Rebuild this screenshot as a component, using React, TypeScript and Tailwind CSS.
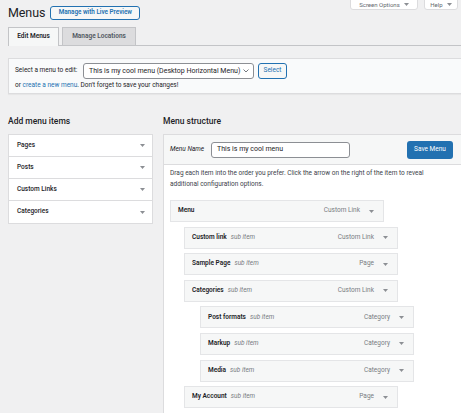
import React from "react";

const Arrow = ({ className = "" }: { className?: string }) => (
  <svg width="5" height="3" viewBox="0 0 5 3" className={className}>
    <path d="M0 0 L5 0 L2.5 3 Z" fill="#8c8f94" />
  </svg>
);

type Item = { title: string; type: string; depth: number; sub?: boolean };

const items: Item[] = [
  { title: "Menu", type: "Custom Link", depth: 0 },
  { title: "Custom link", type: "Custom Link", depth: 1, sub: true },
  { title: "Sample Page", type: "Page", depth: 1, sub: true },
  { title: "Categories", type: "Custom Link", depth: 1, sub: true },
  { title: "Post formats", type: "Category", depth: 2, sub: true },
  { title: "Markup", type: "Category", depth: 2, sub: true },
  { title: "Media", type: "Category", depth: 2, sub: true },
  { title: "My Account", type: "Page", depth: 1, sub: true },
];

const depthClass = ["ml-0", "ml-[14px]", "ml-[30px]"];

export default function App() {
  return (
    <div
      className="w-[461px] h-[413px] overflow-hidden bg-[#f0f0f1] text-[#1d2327]"
      style={{ fontFamily: "Roboto, 'Liberation Sans', sans-serif" }}
    >
      <div className="w-[490px] pl-[8px]">
        {/* header */}
        <div className="flex items-start justify-between h-[27px]">
          <div className="flex items-center gap-[5px] pt-[6px]">
            <h1 className="text-[12.5px] leading-[14px] font-normal tracking-[-0.1px]">Menus</h1>
            <span className="h-[14px] w-[90px] flex items-center justify-center border border-[#2271b1] rounded-[3px] bg-[#f6f7f7] text-[#2271b1] text-[6.3px] font-semibold">
              Manage with Live Preview
            </span>
          </div>
          <div className="flex gap-[6px] mr-[32px] -mt-[2px]">
            <span className="h-[12px] w-[68px] flex items-center justify-center gap-[4px] bg-white border border-[#dcdcde] rounded-b-[3px] text-[6px] text-[#646970]">
              Screen Options <Arrow />
            </span>
            <span className="h-[12px] w-[34px] flex items-center justify-center gap-[4px] bg-white border border-[#dcdcde] rounded-b-[3px] text-[6px] text-[#646970]">
              Help <Arrow />
            </span>
          </div>
        </div>

        {/* tabs */}
        <div className="flex items-end gap-[3px] border-b border-[#c3c4c7] h-[19px]">
          <span className="h-[19px] w-[51px] flex items-center justify-center bg-[#f6f7f7] border border-b-0 border-[#c3c4c7] text-[6.5px] font-semibold -mb-px">
            Edit Menus
          </span>
          <span className="h-[18px] w-[74px] flex items-center justify-center bg-[#dcdcde] border border-b-0 border-[#c3c4c7] text-[6.5px] font-semibold text-[#50575e]">
            Manage Locations
          </span>
        </div>

        {/* select menu box */}
        <div className="mt-[12px] h-[36px] bg-[#f9fafb] border border-[#dcdcde] pl-[6px] pt-[4px] shadow-[0_1px_1px_rgba(0,0,0,0.04)]">
          <div className="flex items-center h-[16px] text-[6.5px]">
            <span className="w-[68px]">Select a menu to edit:</span>
            <span className="w-[171px] h-[16px] flex items-center justify-between pl-[5px] pr-[4px] bg-white border border-[#8c8f94] rounded-[3px] text-[7px]">
              This is my cool menu (Desktop Horizontal Menu)
              <svg width="6" height="4" viewBox="0 0 6 4"><path d="M0.5 0.5 L3 3 L5.5 0.5" stroke="#50575e" strokeWidth="0.8" fill="none" /></svg>
            </span>
            <span className="ml-[4px] w-[29px] h-[16px] flex items-center justify-center border border-[#2271b1] rounded-[3px] bg-[#f6f7f7] text-[#2271b1] text-[6.5px]">
              Select
            </span>
          </div>
          <div className="mt-[2px] text-[6.5px] leading-[9px]">
            or <span className="text-[#2271b1]">create a new menu</span>. Don't forget to save your changes!
          </div>
        </div>

        {/* columns */}
        <div className="flex mt-[21px]">
          <div className="w-[145px] shrink-0">
            <h2 className="text-[8.5px] leading-[12px] font-medium h-[19px]">Add menu items</h2>
            <div className="bg-white border border-[#dcdcde]">
              {["Pages", "Posts", "Custom Links", "Categories"].map((t, i) => (
                <div
                  key={t}
                  className={`h-[22px] flex items-center justify-between pl-[8px] pr-[7px] text-[6.5px] font-medium ${i < 3 ? "border-b border-[#dcdcde]" : ""}`}
                >
                  {t}
                  <Arrow />
                </div>
              ))}
            </div>
          </div>

          <div className="ml-[10px] flex-1">
            <h2 className="text-[8.5px] leading-[12px] font-medium h-[19px]">Menu structure</h2>
            <div className="bg-white border border-[#dcdcde] h-[300px]">
              <div className="h-[30px] bg-[#f6f7f7] border-b border-[#dcdcde] flex items-center pl-[6px] pr-[36px]">
                <span className="text-[6.5px] italic w-[41px]">Menu Name</span>
                <span className="w-[139px] h-[16px] flex items-center pl-[5px] bg-white border border-[#8c8f94] rounded-[3px] text-[7px]">
                  This is my cool menu
                </span>
                <span className="ml-auto w-[46px] h-[18px] flex items-center justify-center bg-[#2271b1] rounded-[3px] text-white text-[6.5px]">
                  Save Menu
                </span>
              </div>
              <div className="pl-[6px] pt-[3px]">
                <p className="text-[6.5px] leading-[11px] w-[270px] text-[#3c434a]">
                  Drag each item into the order you prefer. Click the arrow on the right of the item to reveal additional configuration options.
                </p>
                <div className="mt-[10px] flex flex-col gap-[4.6px]">
                  {items.map((it) => (
                    <div
                      key={it.title}
                      className={`${depthClass[it.depth]} w-[214px] h-[22px] flex items-center bg-[#f6f7f7] border border-[#e4e5e7] pl-[7px] pr-[9px] text-[6.5px]`}
                    >
                      <span className="font-semibold">{it.title}</span>
                      {it.sub && <span className="ml-[4px] italic text-[#787c82]">sub item</span>}
                      <span className="ml-auto text-[#787c82]">{it.type}</span>
                      <Arrow className="ml-[9px]" />
                    </div>
                  ))}
                </div>
              </div>
            </div>
          </div>
        </div>
      </div>
    </div>
  );
}
